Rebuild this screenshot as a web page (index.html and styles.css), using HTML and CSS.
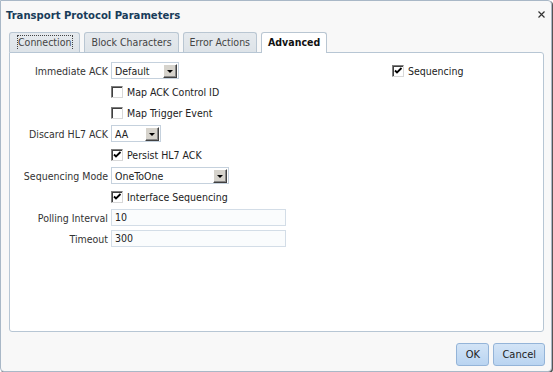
FILE: index.html
```html
<!DOCTYPE html>
<html lang="en">
<head>
    <meta charset="UTF-8">
    <title>Transport Protocol Parameters</title>
    <link rel="stylesheet" href="styles.css">
</head>
<body>
    <div class="dialog">
        <div class="dialog-head">
            <span class="title">Transport Protocol Parameters</span>
            <svg class="close" width="7" height="7" viewBox="0 0 7 7">
                <path d="M0.5 0.5 L6.5 6.5 M6.5 0.5 L0.5 6.5" stroke="#333" stroke-width="1.2"/>
            </svg>
        </div>

        <div class="tabs">
            <div class="tab"><span class="focus">Connection</span></div>
            <div class="tab">Block Characters</div>
            <div class="tab">Error Actions</div>
            <div class="tab active">Advanced</div>
        </div>

        <div class="panel">
            <div class="form">
                <div class="fields">
                    <label class="lbl">Immediate ACK</label>
                    <div class="ctl">
                        <div class="select w-default"><span>Default</span><span class="drop"></span></div>
                    </div>

                    <span></span>
                    <div class="ctl"><span class="check"></span>Map ACK Control ID</div>

                    <span></span>
                    <div class="ctl"><span class="check"></span>Map Trigger Event</div>

                    <label class="lbl">Discard HL7 ACK</label>
                    <div class="ctl">
                        <div class="select w-aa"><span>AA</span><span class="drop"></span></div>
                    </div>

                    <span></span>
                    <div class="ctl"><span class="check on"></span>Persist HL7 ACK</div>

                    <label class="lbl">Sequencing Mode</label>
                    <div class="ctl">
                        <div class="select w-mode"><span>OneToOne</span><span class="drop"></span></div>
                    </div>

                    <span></span>
                    <div class="ctl"><span class="check on"></span>Interface Sequencing</div>

                    <label class="lbl">Polling Interval</label>
                    <div class="ctl"><div class="text-in">10</div></div>

                    <label class="lbl">Timeout</label>
                    <div class="ctl"><div class="text-in">300</div></div>
                </div>

                <div class="side">
                    <div class="ctl"><span class="check on"></span>Sequencing</div>
                </div>
            </div>
        </div>

        <div class="footer">
            <button class="btn btn-ok">OK</button>
            <button class="btn">Cancel</button>
        </div>
    </div>
</body>
</html>
```

FILE: styles.css
```css
body {
    margin: 0;
    padding: 0;
    background-color: #ffffff;
    font-family: "DejaVu Sans Condensed", "Liberation Sans", sans-serif;
    font-size: 10.5px;
    color: #222;
}

.dialog {
    width: 550px;
    height: 370px;
    border: 1px solid #a9b8c7;
    border-radius: 0 4px 4px 4px;
    background-color: #f8f8f8;
    box-shadow: 1px 1px 0 #555;
    display: flex;
    flex-direction: column;
}

.dialog-head {
    height: 31px;
    display: flex;
    align-items: center;
    justify-content: space-between;
    padding: 0 6px 2px 5px;
    box-sizing: border-box;
}

.title {
    font-weight: bold;
    font-size: 11.2px;
    color: #183c5a;
}

.close {
    margin-top: -3px;
}

/* tabs */
.tabs {
    display: flex;
    gap: 4px;
    margin-left: 8px;
    height: 20px;
}

.tab {
    height: 20px;
    line-height: 19px;
    padding: 0 6px;
    background: linear-gradient(#e6eaee, #dde3e8);
    border: 1px solid #b9c6d2;
    border-bottom: none;
    border-radius: 3px 3px 0 0;
    color: #444;
    box-sizing: border-box;
    white-space: nowrap;
}

.tab .focus {
    border: 1px dotted #444;
    border-bottom: none;
    padding: 0 1px 1px 0;
    margin-left: 1px;
}

.tab.active {
    height: 21px;
    background: #fff;
    font-weight: bold;
    color: #111;
    padding: 0 6px;
    position: relative;
    z-index: 1;
}

.panel {
    margin: 0 7px 0 8px;
    height: 280px;
    background: #fff;
    border: 1px solid #b7c6d4;
    border-radius: 0 3px 3px 3px;
    box-sizing: border-box;
}

/* form */
.form {
    display: flex;
    padding-top: 7px;
}

.fields {
    display: grid;
    grid-template-columns: 98px auto;
    column-gap: 3px;
    grid-auto-rows: 21px;
    width: 382px;
}

.lbl {
    text-align: right;
    align-self: center;
    color: #333;
}

.ctl {
    display: flex;
    align-items: center;
    height: 21px;
    color: #222;
}

.check {
    width: 10px;
    height: 10px;
    border: 1px solid;
    border-color: #7d7d7d #d8d8d8 #d8d8d8 #7d7d7d;
    box-shadow: inset 1px 1px 0 #404040;
    background: #fff;
    margin-right: 4px;
    display: inline-block;
}

.check.on {
    background: #fff url("data:image/svg+xml,%3Csvg xmlns='http://www.w3.org/2000/svg' width='10' height='10'%3E%3Cpath d='M2 4.5 L4 6.5 L8.5 2' fill='none' stroke='%23000' stroke-width='1.8'/%3E%3C/svg%3E") no-repeat center;
}

.select {
    height: 17px;
    border: 1px solid #c5d1dd;
    box-sizing: border-box;
    display: flex;
    align-items: center;
    justify-content: space-between;
    padding-left: 3px;
    padding-right: 1px;
    background: #fff;
}

.w-default { width: 68px; }
.w-aa { width: 50px; }
.w-mode { width: 118px; }

.drop {
    width: 14px;
    height: 14px;
    box-sizing: border-box;
    background: #d6d3cc;
    border: 1px solid;
    border-color: #fff #404040 #404040 #fff;
    box-shadow: inset -1px -1px 0 #888;
    display: flex;
    align-items: center;
    justify-content: center;
}

.drop::after {
    content: "";
    border-left: 3px solid transparent;
    border-right: 3px solid transparent;
    border-top: 3px solid #000;
    margin-top: 1px;
}

.text-in {
    width: 175px;
    height: 17px;
    line-height: 15px;
    border: 1px solid #d3dde7;
    background: #fafcfd;
    padding-left: 3px;
    box-sizing: border-box;
}

/* footer */
.footer {
    display: flex;
    justify-content: flex-end;
    gap: 4px;
    padding: 11px 6px 0 0;
}

.btn {
    height: 23px;
    min-width: 51px;
    padding: 0 8px;
    font-family: inherit;
    font-size: 11px;
    color: #222;
    background: linear-gradient(#d3e4f6, #b9d4f1);
    border: 1px solid #94b4d8;
    border-radius: 3px;
}

.btn-ok {
    min-width: 33px;
}
```
